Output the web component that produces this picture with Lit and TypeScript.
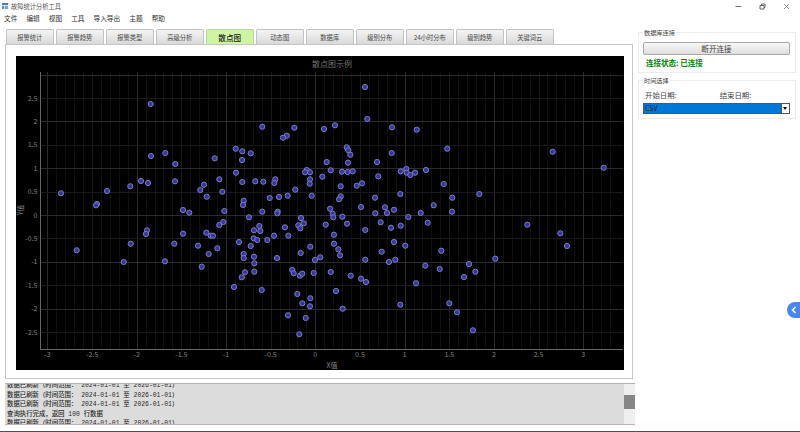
import { LitElement, html, css, svg } from 'lit';
import { customElement } from 'lit/decorators.js';

const TABS = ['报警统计', '报警趋势', '报警类型', '高级分析', '散点图', '动态图', '数据库', '级别分布', '24小时分布', '级别趋势', '关键词云'];
const MENUS = ['文件', '编辑', '视图', '工具', '导入导出', '主题', '帮助'];
const RANGE = '数据已刷新（时间范围： 2024-01-01 至 2026-01-01）';
const LOGS = [RANGE, RANGE, RANGE, '查询执行完成，返回 100 行数据', RANGE];

// chart frame origin is at 16,56 in the page; points were read in page pixels
const OX = 16;
const OY = 56;
const PTS: [number, number][] = [
  [150.7, 104], [61, 193.3], [97, 204], [96, 205.3], [107, 191], [130.3, 186.3], [141, 181], [148, 183], [151, 156],
  [165.3, 153], [175.3, 164], [175, 181.3], [200.3, 190], [204, 184.7], [206.7, 196.7], [183, 210], [189.3, 212.7], [214.7, 158.3],
  [365, 87], [367.3, 119], [262.3, 126.7], [294.3, 127.7], [286.7, 135.7], [283, 137.7], [324, 129], [335, 125.3], [392, 127.3],
  [416.7, 129.7], [235.7, 148.7], [242.3, 151.3], [250.7, 153.3], [242, 160], [346.7, 147.3], [348.3, 150.3], [350.3, 154.7],
  [391.7, 153], [326.7, 162], [348, 162.7], [377, 162], [236, 172.7], [306.7, 170], [305, 172.3], [310, 172.3], [330.7, 170.3],
  [342, 171.7], [347.7, 172], [352.7, 171.3], [322.3, 176.7], [378.3, 176.3], [400.7, 171.3], [406.3, 169], [406.7, 172.7],
  [410.3, 175], [415, 172.7], [219.3, 179.3], [242.3, 182], [255.3, 181.3], [263.3, 181.7], [275.3, 179.3], [274.3, 183],
  [310, 179.3], [309.7, 183.7], [340.7, 186.3], [356.7, 185.7], [362, 183.3], [295.3, 189.7], [222.3, 191.7], [400.3, 194],
  [311.7, 195.7], [287.7, 195.7], [279, 197], [269.7, 198], [340.7, 196.3], [339, 199.3], [375, 197.7], [243.7, 200.7], [243, 205],
  [361, 207], [385, 207.3], [394, 209.7], [330, 208.7], [332.7, 213.7], [375.3, 213.3], [387, 213], [224.3, 211], [262.3, 211.7],
  [277.7, 211.7], [277.3, 213.3], [249, 217.3], [301, 218], [333.3, 217.3], [342.3, 216.7], [408.3, 217],
  [447.3, 148.7], [552.7, 151.7], [603.7, 167.7], [426, 170], [443.7, 184], [479.3, 194], [452.3, 197.7], [433.7, 205.3], [420.7, 213], [452, 211.7],
  [147, 230.3], [146, 234], [130.7, 243.7], [76.7, 250.3], [123.7, 262], [165, 261.3], [174.3, 243.7], [183, 233.7], [206.3, 232.7],
  [210.7, 235.7], [213, 235.7], [198, 245.7], [208.7, 254], [201.7, 266.7], [217.3, 248.3],
  [223.3, 222], [219.3, 225], [259.3, 226], [303.7, 223.3], [298.3, 225.3], [300.3, 228.3], [285, 227.3], [325.7, 224.7], [347, 223.7],
  [380.7, 222.3], [391, 227.7], [400.7, 225.7], [365.3, 230], [254, 230.3], [260.3, 231], [334, 234.7], [274, 235.7], [288.3, 235.7],
  [253.7, 238.3], [257.3, 240], [267.3, 240], [239, 242], [394, 242], [334, 243.7], [250.7, 246], [310.3, 246.7], [405.3, 245.7],
  [338.3, 249.3], [381.7, 251.7], [300.7, 253], [243.7, 254], [340, 255.3], [254, 256.7], [243.7, 258], [277, 258], [320.3, 257.3],
  [315, 260], [365.3, 259.7], [395.3, 259.7], [389, 262], [254.3, 263.3], [254.3, 271.7], [245, 272.3], [292.3, 270], [293.7, 273.3],
  [300, 275.7], [302.3, 273.7], [313.7, 273], [330.7, 272], [350.7, 275.7], [241.7, 277.3], [361, 278.7], [366, 282], [416, 283.3],
  [234, 287], [261.7, 290], [297.3, 294], [336, 291], [310.3, 298.3], [302.3, 303.3], [310, 306.3], [342.7, 308.7], [400.3, 304.7],
  [288, 315.3], [305.7, 318], [299.3, 334.3],
  [427.7, 222.7], [527.3, 224.7], [560.3, 233.3], [567, 246], [441.3, 250.7], [495.3, 258.7], [469, 264], [425.3, 265.7], [439.7, 269],
  [475.3, 271.7], [464, 277], [449.3, 303.3], [457, 312.3], [473, 330.3],
];

// axes mapping, px per unit
const X0 = 315.3 - OX;
const Y0 = 215 - OY;
const SX = 89.3;
const SY = 46.8;
const LEFT = 24.5;
const RIGHT = 607;
const TOP = 16;
const BOTTOM = 293.5;

const X_TICKS = [-3, -2.5, -2, -1.5, -1, -0.5, 0, 0.5, 1, 1.5, 2, 2.5, 3];
const Y_TICKS = [-2.5, -2, -1.5, -1, -0.5, 0, 0.5, 1, 1.5, 2, 2.5];

@customElement('scatter-chart')
export class ScatterChart extends LitElement {
  static override styles = css`
    :host {
      display: block;
    }
    svg {
      display: block;
      background: #000;
    }
    text {
      font-family: 'Noto Sans CJK SC', 'Liberation Sans', sans-serif;
      font-size: 7px;
      fill: #808080;
    }
    .title {
      font-size: 8px;
      fill: #737373;
    }
    .minor {
      stroke: #0f0f0f;
      stroke-width: 1;
    }
    .half {
      stroke: #191919;
      stroke-width: 1;
    }
    .major {
      stroke: #2b2b2b;
      stroke-width: 1;
    }
    .axis {
      stroke: #666;
      stroke-width: 1;
    }
    .dot {
      fill: #3535a2;
      stroke: #7c7cbc;
      stroke-width: 1;
    }
  `;

  private _grid() {
    const lines = [];
    for (let i = -30; i <= 33; i++) {
      const x = Math.round(X0 + (i / 10) * SX) + 0.5;
      if (x < LEFT || x > RIGHT) continue;
      const cls = i % 10 === 0 ? 'major' : i % 5 === 0 ? 'half' : 'minor';
      lines.push(svg`<line class=${cls} x1=${x} x2=${x} y1=${TOP} y2=${BOTTOM}></line>`);
    }
    for (let i = -5; i <= 6; i++) {
      const y = Math.round(Y0 - (i / 2) * SY) + 0.5;
      const cls = i % 2 === 0 ? 'major' : 'half';
      lines.push(svg`<line class=${cls} x1=${LEFT} x2=${RIGHT} y1=${y} y2=${y}></line>`);
    }
    return lines;
  }

  override render() {
    return html`
      <svg width="608" height="313.5" viewBox="0 0 608 313.5">
        <text class="title" x="316" y="11" text-anchor="middle">散点图示例</text>
        ${this._grid()}
        <line class="axis" x1=${LEFT} x2=${LEFT} y1=${TOP} y2=${BOTTOM}></line>
        <line class="axis" x1=${LEFT} x2=${RIGHT} y1=${BOTTOM} y2=${BOTTOM}></line>
        ${X_TICKS.map((t) => svg`<text x=${X0 + t * SX} y="301" text-anchor="middle">${t}</text>`)}
        ${Y_TICKS.map((t) => svg`<text x="21.5" y=${Y0 - t * SY + 2.5} text-anchor="end">${t}</text>`)}
        <text x="316" y="312" text-anchor="middle">X值</text>
        <text transform="translate(6.5 154) rotate(-90)" text-anchor="middle">Y值</text>
        ${PTS.map(([x, y]) => svg`<circle class="dot" cx=${x - OX} cy=${y - OY} r="2.6"></circle>`)}
      </svg>
    `;
  }
}

@customElement('app-root')
export class AppRoot extends LitElement {
  static override styles = css`
    :host {
      display: flex;
      flex-direction: column;
      width: 800px;
      height: 432px;
      overflow: hidden;
      position: relative;
      background: #fff;
      color: #333;
      font-family: 'Noto Sans CJK SC', 'Liberation Sans', sans-serif;
      font-size: 7px;
    }
    .titlebar {
      display: flex;
      align-items: center;
      gap: 3px;
      height: 12px;
      padding: 0 0 0 2px;
      color: #555;
      font-size: 6.25px;
    }
    .app-icon {
      width: 6px;
      height: 6px;
      flex: none;
    }
    .win-ctrls {
      display: flex;
      margin-left: auto;
      margin-right: 10px;
      gap: 17px;
    }
    .win-ctrls svg {
      display: block;
      width: 7px;
      height: 7px;
    }
    .menubar {
      display: flex;
      align-items: center;
      gap: 9px;
      height: 12px;
      padding-left: 4px;
      font-size: 6.7px;
      color: #333;
    }
    .body {
      display: flex;
      flex: 1;
      min-height: 0;
      padding: 5px 4px 0 5px;
      gap: 4px;
    }
    .main {
      display: flex;
      flex-direction: column;
      width: 629px;
      flex: none;
    }
    .tabs {
      display: flex;
      gap: 2.5px;
      height: 15px;
      padding-left: 1px;
    }
    .tab {
      display: flex;
      align-items: center;
      justify-content: center;
      width: 47.5px;
      height: 15px;
      box-sizing: border-box;
      border: 1px solid #c2c2c2;
      border-bottom: none;
      border-radius: 2px 2px 0 0;
      background: linear-gradient(#f4f4f4, #d9d9d9);
      color: #4a4a4a;
      font-size: 6.3px;
    }
    .tab.active {
      background: #cdf5a2;
      color: #222;
      font-size: 7.6px;
      font-weight: 500;
      height: 16px;
      border-color: #bcd9a0;
    }
    .pane {
      box-sizing: border-box;
      width: 628px;
      height: 335px;
      border: 1px solid #c6c6c6;
      padding: 11px 9px 0 10px;
      background: #fff;
    }
    .log {
      display: flex;
      width: 630px;
      height: 42px;
      margin-top: 4px;
      box-sizing: border-box;
      border-top: 1px solid #b4b4b4;
      border-bottom: 1px solid #b4b4b4;
      background: #dcdcdc;
    }
    .log-lines {
      flex: 1;
      overflow: hidden;
      padding-left: 2px;
      font-family: 'Liberation Mono', 'Noto Sans CJK SC', monospace;
      font-size: 6.4px;
      color: #2a2a2a;
      font-weight: 500;
    }
    .log-line {
      height: 9.5px;
      line-height: 9.5px;
      white-space: pre;
      position: relative;
      top: -3px;
    }
    .scrollbar {
      display: flex;
      flex-direction: column;
      width: 11px;
      background: #efefef;
      padding-top: 11px;
    }
    .thumb {
      height: 14px;
      background: #868686;
    }
    .side {
      display: flex;
      flex-direction: column;
      gap: 6.5px;
      width: 158px;
      padding-top: 3px;
    }
    .group {
      position: relative;
      box-sizing: border-box;
      border: 1px solid #ececec;
      padding: 0 4px;
    }
    .group-title {
      position: absolute;
      top: -4px;
      left: 4px;
      padding: 0 1px;
      background: #fff;
      line-height: 8px;
      font-size: 6.2px;
      color: #444;
    }
    .conn {
      height: 41px;
      padding-top: 9px;
    }
    .conn-btn {
      display: flex;
      align-items: center;
      justify-content: center;
      width: 147px;
      height: 13px;
      box-sizing: border-box;
      border: 1px solid #a8a8a8;
      border-radius: 2px;
      background: linear-gradient(#f8f8f8, #dedede);
      font-size: 7.6px;
      color: #444;
    }
    .status {
      margin: 3px 0 0 3px;
      line-height: 10px;
      color: #078207;
      font-size: 7.5px;
      font-weight: 700;
    }
    .time {
      height: 39px;
    }
    .dates {
      display: flex;
      gap: 43px;
      padding: 9px 0 0 2px;
      line-height: 10px;
      font-size: 7.4px;
      color: #444;
    }
    .select {
      display: flex;
      width: 146.5px;
      height: 11px;
      margin-top: 3px;
      box-sizing: border-box;
      border: 1px solid #555;
      background: #0078d7;
    }
    .select-value {
      flex: 1;
      padding-left: 1px;
      line-height: 9px;
      font-size: 7px;
      color: #222;
    }
    .select-arrow {
      display: flex;
      align-items: center;
      justify-content: center;
      width: 7px;
      background: #fff;
      border-left: 1px solid #555;
    }
    .select-arrow i {
      width: 0;
      height: 0;
      border-left: 2.5px solid transparent;
      border-right: 2.5px solid transparent;
      border-top: 3px solid #111;
    }
    .float-btn {
      position: absolute;
      right: 0;
      top: 302px;
      display: flex;
      align-items: center;
      justify-content: center;
      width: 13px;
      height: 16px;
      border-radius: 8px 0 0 8px;
      background: #4a86f2;
    }
    .taskbar {
      height: 1px;
      flex: none;
      background: #49534a;
    }
  `;

  override render() {
    return html`
      <div class="titlebar">
        <svg class="app-icon" viewBox="0 0 6 6">
          <rect width="6" height="6" fill="#dfe8f5"></rect>
          <rect y="0" width="6" height="2" fill="#4b78c8"></rect>
          <rect x="0" y="3" width="2" height="3" fill="#5a8ad8"></rect>
          <rect x="3" y="3" width="3" height="3" fill="#7aa0d8"></rect>
        </svg>
        <span>故障统计分析工具</span>
        <div class="win-ctrls">
          <svg viewBox="0 0 7 7"><path d="M0.5 3.5H6.5" stroke="#777" fill="none"></path></svg>
          <svg viewBox="0 0 7 7"><path d="M1 2.5H5V6H1ZM2.5 2.5V1H6V4.5H5" stroke="#666" fill="none"></path></svg>
          <svg viewBox="0 0 7 7"><path d="M1 1L6 6M6 1L1 6" stroke="#777" stroke-width="0.8" fill="none"></path></svg>
        </div>
      </div>
      <div class="menubar">${MENUS.map((m) => html`<span>${m}</span>`)}</div>
      <div class="body">
        <div class="main">
          <div class="tabs">
            ${TABS.map((t, i) => html`<div class="tab ${i === 4 ? 'active' : ''}">${t}</div>`)}
          </div>
          <div class="pane"><scatter-chart></scatter-chart></div>
          <div class="log">
            <div class="log-lines">${LOGS.map((l) => html`<div class="log-line">${l}</div>`)}</div>
            <div class="scrollbar"><div class="thumb"></div></div>
          </div>
        </div>
        <div class="side">
          <div class="group conn">
            <div class="group-title">数据库连接</div>
            <div class="conn-btn">断开连接</div>
            <div class="status">连接状态: 已连接</div>
          </div>
          <div class="group time">
            <div class="group-title">时间选择</div>
            <div class="dates"><span>开始日期:</span><span>结束日期:</span></div>
            <div class="select">
              <div class="select-value">CSV</div>
              <div class="select-arrow"><i></i></div>
            </div>
          </div>
        </div>
      </div>
      <div class="taskbar"></div>
      <div class="float-btn">
        <svg width="6" height="8" viewBox="0 0 6 8"><path d="M4.5 1L1.5 4L4.5 7" stroke="#fff" stroke-width="1.5" fill="none"></path></svg>
      </div>
    `;
  }
}
